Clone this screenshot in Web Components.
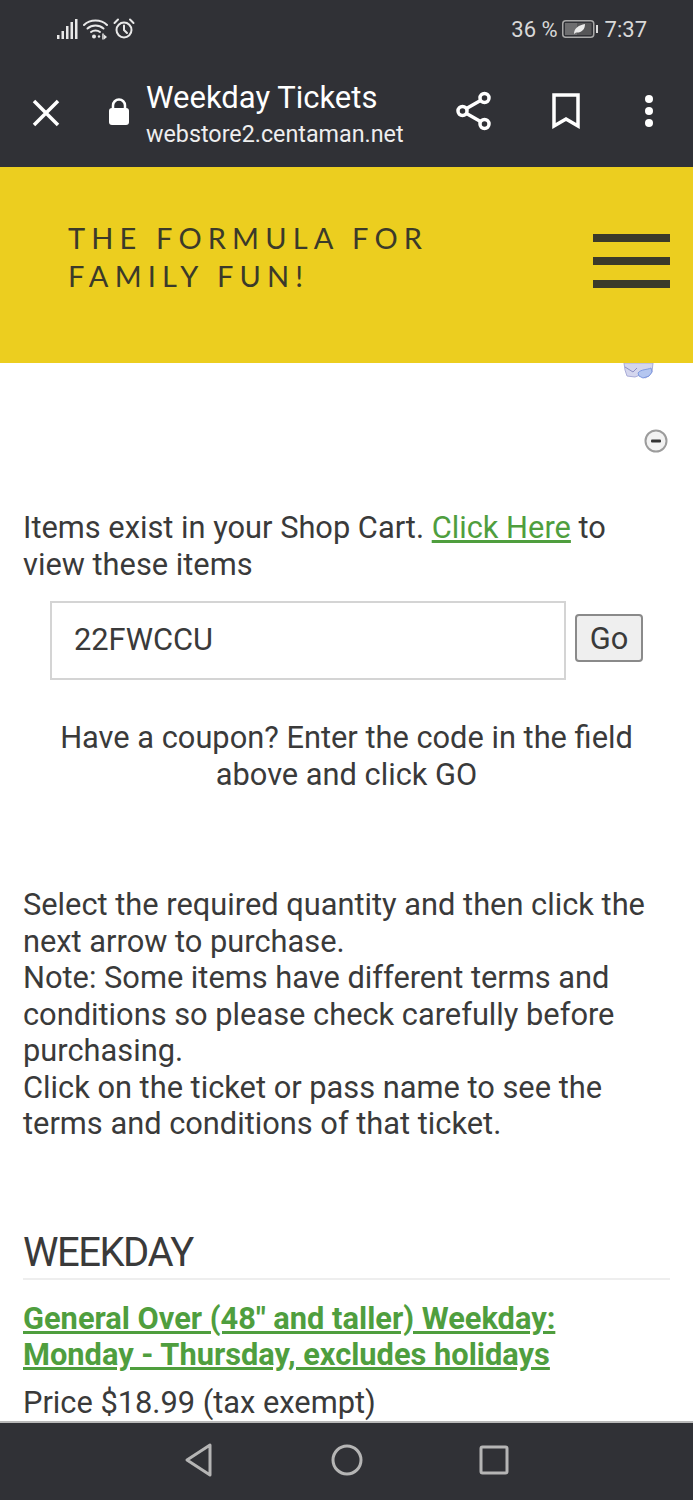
<!DOCTYPE html>
<html lang="en">
<head>
<meta charset="utf-8">
<title>Weekday Tickets</title>
<style>
    html, body { margin: 0; padding: 0; background: #fff; }
    body { font-family: Roboto, "Liberation Sans", sans-serif; color: #3a3a3a; }
</style>
</head>
<body>

<template id="phone_shell_tpl">
    <style>
        :host { display: flex; flex-direction: column; width: 693px; height: 1500px; overflow: hidden; }
        .top { flex: none; }
        .middle { flex: 1; min-height: 0; overflow: hidden; }
        .bottom { flex: none; }
    </style>
    <div class="top"><slot name="top"></slot></div>
    <div class="middle"><slot></slot></div>
    <div class="bottom"><slot name="bottom"></slot></div>
</template>

<template id="status_bar_tpl">
    <style>
        :host { display: flex; align-items: center; justify-content: space-between; height: 58px; background: #303136; color: #d8d8d8; padding: 0 46px 0 56px; box-sizing: border-box; font-size: 22px; }
        .icons, .info { display: flex; align-items: center; }
        .icons { gap: 4px; }
        .info { gap: 7px; }
        .battery { margin-left: -3px; }
        svg { display: block; }
    </style>
    <div class="icons">
        <svg width="23" height="22" viewBox="0 0 23 22" fill="#e8e8e8">
            <rect x="1" y="17" width="2.500" height="4"/><rect x="5.500" y="13" width="2.500" height="8"/><rect x="10" y="8" width="2.500" height="13"/><rect x="14.500" y="4" width="2.500" height="17"/><rect x="19" y="1" width="2.500" height="20"/>
        </svg>
        <svg width="26" height="22" viewBox="0 0 26 22" fill="none" stroke="#e8e8e8" stroke-width="2" stroke-linecap="round">
            <path d="M1 7C7 1 18 1 24 7"/><path d="M4.500 10.500C9 6.500 16 6.500 20.500 10.500"/><path d="M8 14C10.500 12 14.500 12 17 14"/>
            <circle cx="11" cy="18.500" r="2" fill="#e8e8e8" stroke="none"/><circle cx="16" cy="18.500" r="1.200" fill="#e8e8e8" stroke="none"/><path d="M20 16v5" stroke-width="1.500"/><path d="M21 16.500l3 2.500l-3 2.500Z" fill="#e8e8e8" stroke="none"/>
        </svg>
        <svg width="22" height="22" viewBox="0 0 22 22" fill="none" stroke="#e8e8e8" stroke-width="2" stroke-linecap="round">
            <circle cx="11" cy="12" r="7.500"/><path d="M11 7.500V12l3 3"/><path d="M1.500 5L5 1.500M20.500 5L17 1.500"/>
        </svg>
    </div>
    <div class="info">
        <span>36 %</span>
        <svg class="battery" width="36" height="20" viewBox="0 0 36 20">
            <rect x="0.750" y="1.750" width="31" height="16.500" rx="3" fill="none" stroke="#a8a8a8" stroke-width="1.500"/>
            <rect x="3" y="4" width="12" height="12" fill="#6e6e70"/>
            <rect x="15" y="4" width="14.500" height="12" fill="#565658"/>
            <path d="M12 15C12 9 17 6 23 5C23 11 19 14 14 13.500Z" fill="#ececec"/>
            <rect x="34" y="6" width="2" height="8" fill="#dcdcdc"/>
        </svg>
        <span>7:37</span>
    </div>
</template>

<template id="browser_toolbar_tpl">
    <style>
        :host { display: flex; align-items: center; height: 109px; background: #303136; color: #fff; box-sizing: border-box; padding: 0 40px 0 31px; }
        svg { display: block; flex: none; }
        .close { margin-right: 47px; }
        .lock { margin-right: 16px; margin-top: -2px; }
        .titles { flex: 1; min-width: 0; margin-top: 3px; }
        .title { font-size: 31px; line-height: 40px; }
        .url { font-size: 23.300px; line-height: 32px; color: #eee; }
        .actions { display: flex; align-items: center; margin-top: -3px; }
        .share { margin-right: 60px; }
        .mark { margin-right: 65px; }
    </style>
    <svg class="close" width="30" height="30" viewBox="0 0 30 30" stroke="#fff" stroke-width="3.500" fill="none"><path d="M3 3L27 27M27 3L3 27"/></svg>
    <svg class="lock" width="22" height="27" viewBox="0 0 22 27"><path d="M5 11V7.500a6 6 0 0 1 12 0v3.500" fill="none" stroke="#fff" stroke-width="2.500"/><rect x="1" y="10" width="20" height="17" rx="3" fill="#fff"/></svg>
    <div class="titles">
        <div class="title">Weekday Tickets</div>
        <div class="url">webstore2.centaman.net</div>
    </div>
    <div class="actions">
        <svg class="share" width="36" height="40" viewBox="0 0 36 40" fill="none" stroke="#fff" stroke-width="3.500"><circle cx="28.500" cy="7" r="4.500"/><circle cx="6.500" cy="20" r="4.500"/><circle cx="28.500" cy="33" r="4.500"/><path d="M10.500 17.500L24.500 9.500M10.500 22.500L24.500 30.500"/></svg>
        <svg class="mark" width="28" height="36" viewBox="0 0 28 36" fill="none" stroke="#fff" stroke-width="3.500"><path d="M2 2H26V33L14 26L2 33Z"/></svg>
        <svg width="8" height="34" viewBox="0 0 8 34" fill="#fff"><circle cx="4" cy="5" r="4"/><circle cx="4" cy="17" r="4"/><circle cx="4" cy="29" r="4"/></svg>
    </div>
</template>

<template id="site_header_tpl">
    <style>
        :host { display: flex; justify-content: space-between; height: 196px; background: #ecce1f; box-sizing: border-box; padding: 52px 23px 0 68px; color: #3b3a2a; }
        .tagline { font-family: Lato, "Open Sans", sans-serif; font-size: 29px; line-height: 38px; letter-spacing: 6.150px; }
        .burger { display: flex; flex-direction: column; gap: 15px; width: 77px; margin-top: 15px; }
        .burger i { display: block; height: 8px; background: #3b3a2a; }
    </style>
    <div class="tagline"><slot></slot></div>
    <div class="burger"><i></i><i></i><i></i></div>
</template>

<template id="coupon_form_tpl">
    <style>
        :host { display: flex; align-items: flex-start; gap: 9px; margin: 18px 0 40px 27px; }
        .field { width: 516px; height: 79px; box-sizing: border-box; border: 2px solid #d4d4d4; padding: 0 22px; display: flex; align-items: center; font-size: 30.800px; color: #3a3a3a; background: #fff; }
        .go { width: 68px; height: 48px; margin-top: 13px; box-sizing: border-box; border: 2px solid #8a8a8a; border-radius: 4px; background: #efefef; font-family: inherit; font-size: 30.800px; color: #3a3a3a; padding: 0; }
    </style>
    <div class="field"><slot></slot></div>
    <button class="go" type="button">Go</button>
</template>

<template id="ticket_item_tpl">
    <style>
        :host { display: block; }
        .name { font-weight: 700; font-size: 30.800px; line-height: 36.500px; color: #4f9e3e; text-decoration: underline; margin-top: 21px; }
        .price { font-size: 30.800px; line-height: 36.500px; margin-top: 11px; }
    </style>
    <div class="name"><slot name="name"></slot></div>
    <div class="price"><slot name="price"></slot></div>
</template>

<template id="store_page_tpl">
    <style>
        :host { display: block; padding: 0 23px; font-size: 30.800px; line-height: 36.500px; color: #3a3a3a; background: #fff; height: 100%; box-sizing: border-box; }
        .tools { display: flex; flex-direction: column; align-items: flex-end; }
        .blob { margin-right: 16px; }
        .minus { margin-top: 50px; margin-right: 2px; }
        svg { display: block; }
    </style>
    <div class="tools">
        <svg class="blob" width="31" height="16" viewBox="0 0 31 16"><path d="M1 0H30L29 9L26 13L22 15L17 12L12 14L4 13L2 7Z" fill="#d4d6ee" stroke="#a9acd8" stroke-width="1"/><path d="M15 10C18 6 24 7 28 5L29 9L26 13L20 15L16 13Z" fill="#b4c6f0" stroke="#7f9ae0" stroke-width="1"/><path d="M2 4L10 9L14 5" fill="none" stroke="#8c8fc4" stroke-width="1"/></svg>
        <svg class="minus" width="24" height="24" viewBox="0 0 24 24"><circle cx="12" cy="12" r="10.500" fill="#f2f2f2" stroke="#9c9c9c" stroke-width="2"/><rect x="7" y="10.500" width="10" height="3" rx="1" fill="#333"/></svg>
    </div>
    <slot></slot>
</template>

<template id="page_text_tpl">
    <style>
        :host { display: block; }
        :host([centered]) { text-align: center; }
    </style>
    <slot></slot>
</template>

<template id="section_title_tpl">
    <style>
        :host { display: block; font-size: 40px; line-height: 44px; letter-spacing: -1.500px; color: #3a3a3a; border-bottom: 2px solid #eee; padding-bottom: 3px; }
    </style>
    <slot></slot>
</template>

<template id="nav_bar_tpl">
    <style>
        :host { display: flex; justify-content: center; align-items: center; gap: 116px; height: 79px; background: #303136; border-top: 2px solid #b9b9b9; box-sizing: border-box; padding-bottom: 3px; }
        svg { display: block; }
    </style>
    <svg width="30" height="34" viewBox="0 0 30 34" fill="none" stroke="#b5b5b5" stroke-width="3" stroke-linejoin="round"><path d="M25 2V32L2 17Z"/></svg>
    <svg width="32" height="32" viewBox="0 0 32 32" fill="none" stroke="#b5b5b5" stroke-width="3"><circle cx="16" cy="16" r="14"/></svg>
    <svg width="30" height="30" viewBox="0 0 30 30" fill="none" stroke="#b5b5b5" stroke-width="3" stroke-linejoin="round"><rect x="2" y="2" width="26" height="26" rx="1.500"/></svg>
</template>

<phone-shell>
    <div slot="top">
        <status-bar></status-bar>
        <browser-toolbar></browser-toolbar>
        <site-header>THE FORMULA FOR<br>FAMILY FUN!</site-header>
    </div>
    <store-page>
        <page-text style="margin-top:57px">Items exist in your Shop Cart. <a href="#" style="color:#4f9e3e">Click Here</a> to view these items</page-text>
        <coupon-form>22FWCCU</coupon-form>
        <page-text centered>Have a coupon? Enter the code in the field above and click GO</page-text>
        <page-text style="margin-top:94px">Select the required quantity and then click the next arrow to purchase.<br>Note: Some items have different terms and conditions so please check carefully before purchasing.<br>Click on the ticket or pass name to see the terms and conditions of that ticket.</page-text>
        <section-title style="margin-top:88px">WEEKDAY</section-title>
        <ticket-item>
            <span slot="name">General Over (48" and taller) Weekday:<br>Monday - Thursday, excludes holidays</span>
            <span slot="price">Price $18.99 (tax exempt)</span>
        </ticket-item>
    </store-page>
    <nav-bar slot="bottom"></nav-bar>
</phone-shell>

<script type="module">
    // every element here is only a template in an open shadow root
    const elements = {
        'phone-shell': 'phone_shell_tpl',
        'status-bar': 'status_bar_tpl',
        'browser-toolbar': 'browser_toolbar_tpl',
        'site-header': 'site_header_tpl',
        'coupon-form': 'coupon_form_tpl',
        'ticket-item': 'ticket_item_tpl',
        'store-page': 'store_page_tpl',
        'page-text': 'page_text_tpl',
        'section-title': 'section_title_tpl',
        'nav-bar': 'nav_bar_tpl',
    };

    for (const [name, tplId] of Object.entries(elements)) {
        customElements.define(name, class extends HTMLElement {
            constructor() {
                super();
                this.attachShadow({mode: 'open'});
                this.shadowRoot.appendChild(document.getElementById(tplId).content.cloneNode(true));
            }
        });
    }
</script>
</body>
</html>
